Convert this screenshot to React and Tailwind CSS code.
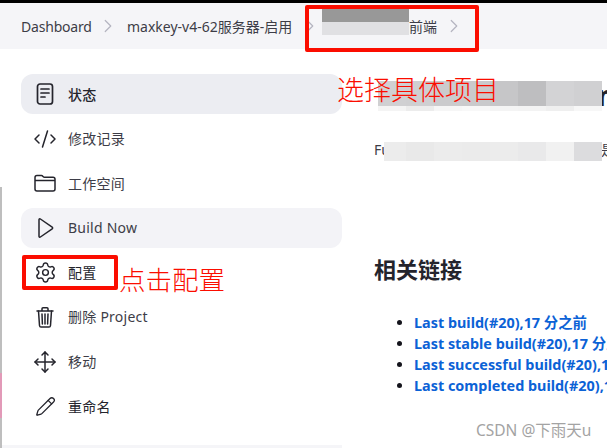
import { CodeXml, Settings, Move, Pencil, ChevronRight } from 'lucide-react'

const FONT = "font-['Noto_Sans','Noto_Sans_CJK_SC',sans-serif]"

const IconStatus = () => (
  <svg width="24" height="24" viewBox="0 0 24 24" fill="none" stroke="currentColor" strokeWidth="1.7" strokeLinejoin="round" strokeLinecap="round">
    <rect x="4.5" y="2" width="15" height="20" rx="2.5" />
    <path d="M8 7h8M8 11h8M8 15h4" />
  </svg>
)

const IconFolder = () => (
  <svg width="24" height="24" viewBox="0 0 24 24" fill="none" stroke="currentColor" strokeWidth="1.5" strokeLinejoin="round">
    <path d="M2 8V6.500C2 5.500 2.800 4.500 4 4.500h4.500c1.400 0 1.600 1.800 3 1.800H20c1.200 0 2 .8 2 2V18c0 1.200-.8 2-2 2H4c-1.200 0-2-.8-2-2z" />
    <path d="M2 9.500h20" />
  </svg>
)

const IconPlay = () => (
  <svg width="24" height="24" viewBox="0 0 24 24" fill="none" stroke="currentColor" strokeWidth="1.5" strokeLinejoin="round">
    <path d="M6 3.800c0-.8.800-1.200 1.400-.8l11.800 8.100c.6.400.6 1.300 0 1.700L7.400 21c-.6.400-1.400 0-1.400-.8z" />
  </svg>
)

const IconTrash = () => (
  <svg width="24" height="24" viewBox="0 0 24 24" fill="none" stroke="currentColor" strokeWidth="1.5" strokeLinecap="round" strokeLinejoin="round">
    <path d="M4 6h16" />
    <path d="M9 5.500V3.800c0-.6.400-1 1-1h4c.6 0 1 .4 1 1v1.700" />
    <path d="M5.500 6l1 14.500c.1.900.7 1.500 1.500 1.500h8c.8 0 1.400-.6 1.500-1.500l1-14.500" />
    <path d="M9 9l.4 10M12 9v10M15 9l-.4 10" />
  </svg>
)

const MENU = [
  { label: '状态', icon: <IconStatus />, bg: 'bg-[#ecedf2]', text: 'font-medium text-[#24242c]' },
  { label: '修改记录', icon: <CodeXml size={24} strokeWidth={1.5} /> },
  { label: '工作空间', icon: <IconFolder /> },
  { label: 'Build Now', icon: <IconPlay />, bg: 'bg-[#f3f3f7]' },
  { label: '配置', icon: <Settings size={23} strokeWidth={1.5} />, text: 'text-[#24242c]' },
  { label: '删除 Project', icon: <IconTrash /> },
  { label: '移动', icon: <Move size={24} strokeWidth={1.5} /> },
  { label: '重命名', icon: <Pencil size={21} strokeWidth={1.5} />, text: 'text-[#24242c]' },
]

const TITLE_TILES = [
  'bg-[#d0d0d2]', 'bg-[#cfcfd1]', 'bg-[#cbcbcd]', 'bg-[#cacacc]',
  'bg-[#c6c6c8]', 'bg-[#bebec0]', 'bg-[#d3d3d5]', 'bg-[#d0d0d2]',
]
const SUB_TILES = [
  'bg-[#f4f4f4]', 'bg-[#ececec]', 'bg-[#f6f6f6]', 'bg-[#f8f8f8]',
  'bg-[#f4f4f4]', 'bg-[#f3f3f3]', 'bg-[#efefef]', 'bg-[#f7f7f7]',
]
const DESC_TILES = [
  'bg-[#ececec]', 'bg-[#e9e9e9]', 'bg-[#ececec]', 'bg-[#ebebeb]',
  'bg-[#ececec]', 'bg-[#e9e9ea]', 'bg-[#f1f1f1]', 'bg-[#dcdcde]',
]

const LINKS = [
  'Last build(#20),17 分之前',
  'Last stable build(#20),17 分之前',
  'Last successful build(#20),17 分之前',
  'Last completed build(#20),17 分之前',
]

const Chevron = ({ className }) => (
  <ChevronRight size={22} strokeWidth={1.3} className={`text-[#b4b4c0] shrink-0 ${className}`} />
)

export default function App() {
  return (
    <div className={`relative w-[607px] h-[448px] overflow-hidden bg-white ${FONT}`}>
      <div className="h-[3px] bg-black" />

      {/* Breadcrumb */}
      <div className="h-[46px] bg-[#f5f5f8] flex items-center pl-[21px] text-[14px] text-[#3d3d47] whitespace-nowrap">
        <span className="w-[70px] tracking-[-0.2px]">Dashboard</span>
        <Chevron className="ml-[6px]" />
        <span className="ml-[8px] w-[165px]">maxkey-v4-62服务器-启用</span>
        <Chevron className="ml-[7px]" />
        <span className="ml-[88px] w-[28px]">前端</span>
        <Chevron className="ml-[6px]" />
      </div>

      <div className="flex">
        {/* Sidebar */}
        <nav className="w-[321px] ml-[21px] mt-[25px] flex flex-col gap-[4.6px] shrink-0">
          {MENU.map(item => (
            <div
              key={item.label}
              className={`h-10 rounded-[12px] flex items-center gap-[11px] pl-3 text-[14px] tracking-[0.25px] whitespace-nowrap ${item.bg || ''} ${item.text || 'text-[#3d3d47]'}`}
            >
              <span className="w-6 h-6 flex items-center justify-center text-[#24242c]">{item.icon}</span>
              {item.label}
            </div>
          ))}
        </nav>

        {/* Main content */}
        <main className="ml-[32px] flex-1 min-w-0 text-[#24242c] whitespace-nowrap">
          <div className="h-[34px] mt-[29px] flex text-[28px] font-extrabold leading-[34px]">
            <span className="ml-[223px]">n</span>
          </div>
          <div className="mt-[28px] h-5 flex text-[14px] leading-5 text-[#3d3d47]">
            <span>Fu</span>
            <span className="ml-[211px]">是</span>
          </div>
          <h2 className="mt-[95px] text-[22px] font-bold leading-7">相关链接</h2>
          <ul className="mt-[29px] ml-[26px] list-disc list-outside pl-[14px] text-[14.400px] font-bold leading-[21px] marker:text-[#14141c]">
            {LINKS.map(link => (
              <li key={link} className="text-[#0b62d6]">{link}</li>
            ))}
          </ul>
        </main>
      </div>

      <div className="absolute left-0 bottom-0 w-[342px] h-[3px] bg-[#f5f5f8]" />

      {/* Neighbouring window peeking in at the left edge */}
      <div className="absolute left-0 top-[187px] bottom-0 w-[2px] bg-[#bebebe]" />
      <div className="absolute left-0 top-[373px] h-[45px] w-[2px] bg-[#e29ab8]" />

      {/* Mosaic blur over the project name */}
      <div className="absolute left-[322px] top-[9px] w-[87px] h-[13px] bg-[#989898]" />
      <div className="absolute left-[322px] top-[22px] w-[87px] h-[13px] bg-[#e0e0e3]" />

      {/* Mosaic blur over the title and description */}
      <div className="absolute left-[378px] top-[81px] w-[224px] h-[25px] grid grid-cols-8">
        {TITLE_TILES.map((c, i) => <div key={i} className={c} />)}
      </div>
      <div className="absolute left-[378px] top-[106px] w-[224px] h-[5px] grid grid-cols-8">
        {SUB_TILES.map((c, i) => <div key={i} className={c} />)}
      </div>
      <div className="absolute left-[384px] top-[142px] w-[218px] h-[19px] grid grid-cols-[22px_repeat(7,28px)]">
        {DESC_TILES.map((c, i) => <div key={i} className={c} />)}
      </div>

      {/* Red annotations */}
      <div className="absolute left-[305px] top-[5px] w-[174px] h-[47px] border-[4px] border-[#fb0d00] rounded-[2px]" />
      <div className="absolute left-[22px] top-[255px] w-[96px] h-[35px] border-[4px] border-[#fb0d00] rounded-[2px]" />
      <span className="absolute left-[337px] top-[72px] text-[27px] leading-9 font-light text-[#fb0d00] whitespace-nowrap">选择具体项目</span>
      <span className="absolute left-[119px] top-[262px] text-[26.500px] leading-9 font-light text-[#fb0d00] whitespace-nowrap">点击配置</span>

      {/* Watermark */}
      <span className="absolute left-[476px] top-[420px] text-[15.500px] leading-5 text-[#a3a3a3] whitespace-nowrap">CSDN @下雨天u</span>
    </div>
  )
}
